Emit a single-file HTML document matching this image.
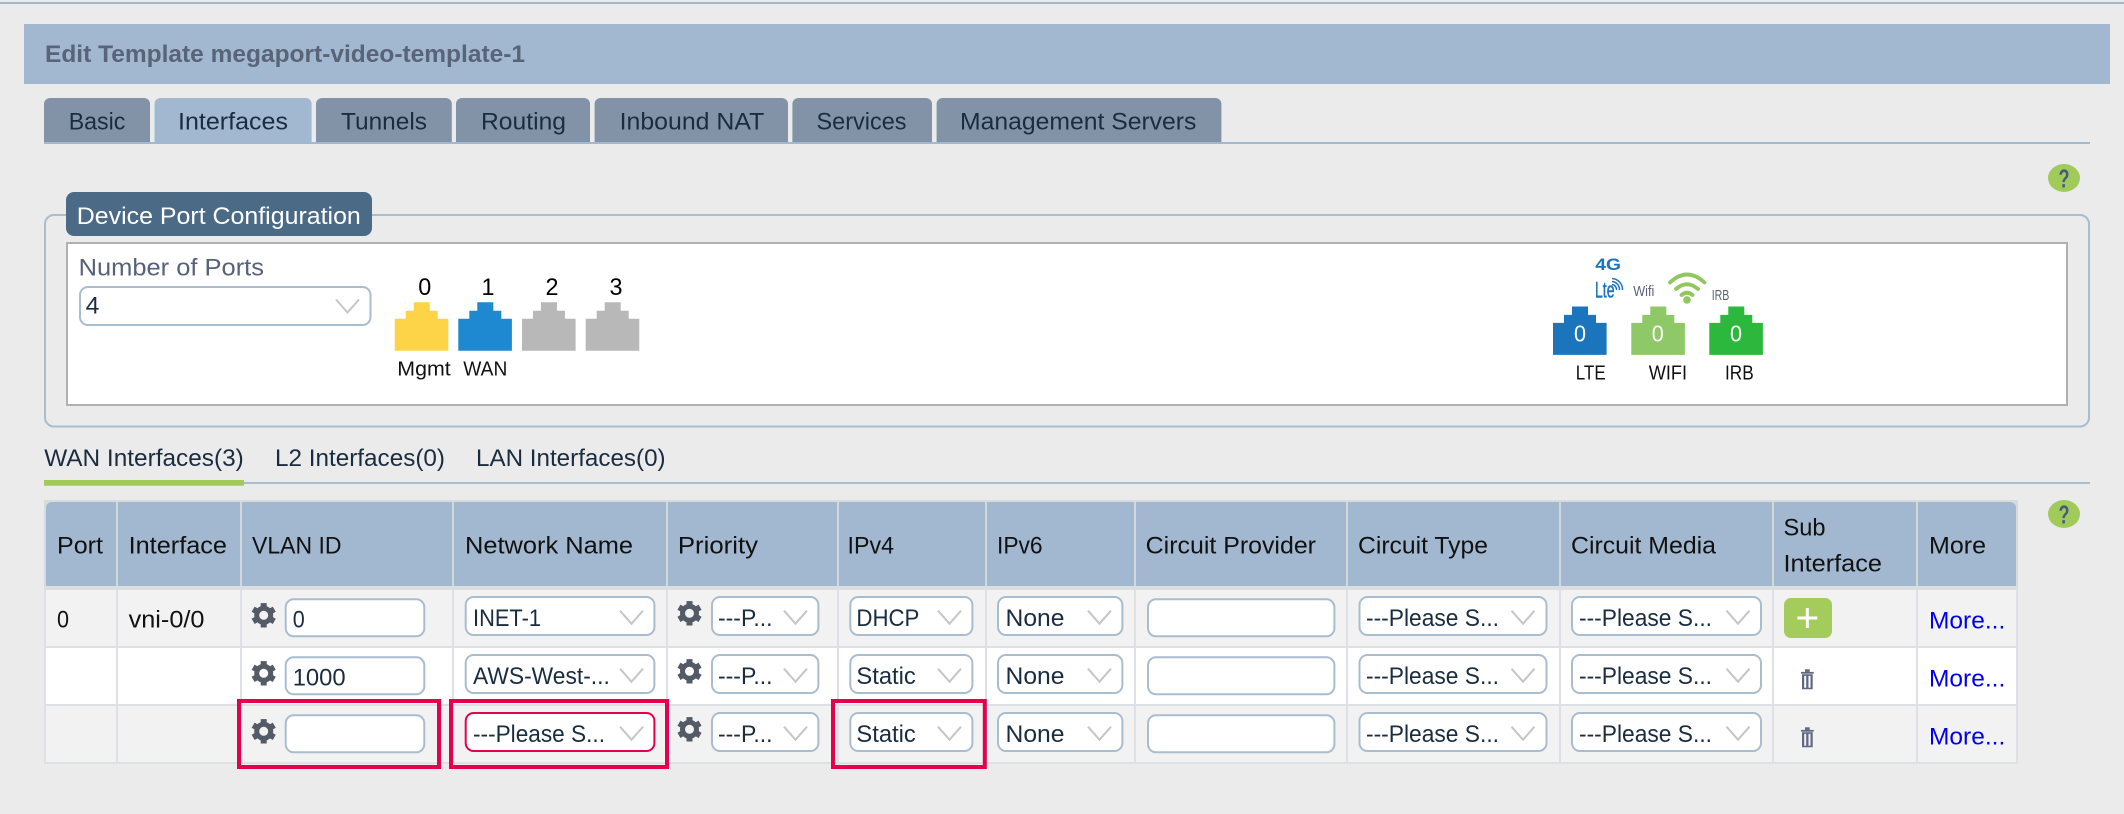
<!DOCTYPE html>
<html lang="en"><head><meta charset="utf-8"><title>Edit Template</title>
<style>
html,body{margin:0;padding:0;background:#ebebeb;width:2124px;height:814px;overflow:hidden}
svg{display:block}
text{font-family:"Liberation Sans",Arial,sans-serif;font-size:24.5px;fill:#1a2d40}
.k{fill:#111}
.b{fill:#0000ee}
.f{fill:#fff;stroke:#a9bdcf;stroke-width:2}
.t{fill:#8293a8}
.c{fill:none;stroke:#c6c6c6;stroke-width:2}
.s{fill:#dde1e6}
.h{fill:#d5d8db}
.r{fill:none;stroke:#e4004b;stroke-width:4}
.w{fill:#fff}
.sm{font-size:20.5px;fill:#111}
</style></head><body>
<svg xmlns="http://www.w3.org/2000/svg" width="2124" height="814" viewBox="0 0 2124 814">
<defs>
<g id="gear" fill="#555b66"><circle r="7" fill="none" stroke="#555b66" stroke-width="5"/><rect x="-3" y="-12.2" width="6" height="5"/><rect x="-3" y="-12.2" width="6" height="5" transform="rotate(60)"/><rect x="-3" y="-12.2" width="6" height="5" transform="rotate(120)"/><rect x="-3" y="-12.2" width="6" height="5" transform="rotate(180)"/><rect x="-3" y="-12.2" width="6" height="5" transform="rotate(240)"/><rect x="-3" y="-12.2" width="6" height="5" transform="rotate(300)"/></g>
<polygon id="port" points="19,0 35,0 35,8.4 43,8.4 43,16.4 53.6,16.4 53.6,48.4 0,48.4 0,16.4 11,16.4 11,8.4 19,8.4"/>
<polyline id="chev" class="c" points="0,0 11.5,13 23,0"/>
<g id="trash" fill="#5f6880"><rect x="0" y="2.6" width="12.7" height="1.8"/><rect x="4" y="0" width="4.7" height="2.6"/><path fill-rule="evenodd" d="M1,5H11.7V20H1ZM3.2,6.6V18.4H5.2V6.6ZM7.5,6.6V18.4H9.5V6.6Z"/></g>
</defs>

<rect x="0" y="2" width="2124" height="2" fill="#a2b8d0"/>

<!-- title -->
<rect x="24" y="24" width="2086" height="60" fill="#a2b8d0"/>
<text x="45" y="62" font-weight="bold" style="fill:#5a6478;font-size:24px" textLength="480" lengthAdjust="spacingAndGlyphs">Edit Template megaport-video-template-1</text>

<!-- tabs -->
<path class="t" d="M44,142V104a6,6 0 0 1 6-6H144a6,6 0 0 1 6,6V142Z"/>
<path fill="#a2b8d0" d="M154.500,142V104a6,6 0 0 1 6-6H305.600a6,6 0 0 1 6,6V142Z"/>
<path class="t" d="M316,142V104a6,6 0 0 1 6-6H445.800a6,6 0 0 1 6,6V142Z"/>
<path class="t" d="M456,142V104a6,6 0 0 1 6-6H584a6,6 0 0 1 6,6V142Z"/>
<path class="t" d="M594.600,142V104a6,6 0 0 1 6-6H782a6,6 0 0 1 6,6V142Z"/>
<path class="t" d="M792.400,142V104a6,6 0 0 1 6-6H926a6,6 0 0 1 6,6V142Z"/>
<path class="t" d="M936.600,142V104a6,6 0 0 1 6-6H1215.400a6,6 0 0 1 6,6V142Z"/>
<rect x="44" y="142" width="2046" height="2" fill="#a2b8d0"/>
<text x="68.700" y="129.300" textLength="56.700" lengthAdjust="spacingAndGlyphs">Basic</text>
<text x="178" y="129.300" textLength="110" lengthAdjust="spacingAndGlyphs">Interfaces</text>
<text x="341" y="129.300" textLength="86" lengthAdjust="spacingAndGlyphs">Tunnels</text>
<text x="481" y="129.300" textLength="85" lengthAdjust="spacingAndGlyphs">Routing</text>
<text x="619.600" y="129.300" textLength="144.700" lengthAdjust="spacingAndGlyphs">Inbound NAT</text>
<text x="816.500" y="129.300" textLength="90" lengthAdjust="spacingAndGlyphs">Services</text>
<text x="960" y="129.300" textLength="236.400" lengthAdjust="spacingAndGlyphs">Management Servers</text>

<!-- help 1 -->
<ellipse cx="2064" cy="178" rx="16" ry="14" fill="#a0cb5a"/>
<text x="2058.500" y="187.500" font-weight="bold" style="font-size:26px;fill:#4a5a7c" textLength="11" lengthAdjust="spacingAndGlyphs">?</text>

<!-- fieldset -->
<rect x="45" y="215" width="2044" height="211.500" rx="9" fill="none" stroke="#a9bdcf" stroke-width="2"/>
<rect x="67" y="243" width="2000" height="162" fill="#fff" stroke="#b0b0b0" stroke-width="2"/>
<rect x="66" y="192" width="306" height="44" rx="8" fill="#4a6a86"/>
<text x="76.800" y="224" style="fill:#fff" textLength="284" lengthAdjust="spacingAndGlyphs">Device Port Configuration</text>

<text x="78.600" y="275.300" style="fill:#57627a" textLength="185.400" lengthAdjust="spacingAndGlyphs">Number of Ports</text>
<rect class="f" x="80" y="287" width="290.500" height="38" rx="8"/>
<text x="85.700" y="313.300" textLength="13.800" lengthAdjust="spacingAndGlyphs">4</text>
<use href="#chev" x="336" y="299.500"/>

<!-- ports left -->
<text class="k" x="418.200" y="295" textLength="13" lengthAdjust="spacingAndGlyphs" style="fill:#000">0</text>
<text class="k" x="481.500" y="295" textLength="13" lengthAdjust="spacingAndGlyphs" style="fill:#000">1</text>
<text class="k" x="545.500" y="295" textLength="13" lengthAdjust="spacingAndGlyphs" style="fill:#000">2</text>
<text class="k" x="609.500" y="295" textLength="13" lengthAdjust="spacingAndGlyphs" style="fill:#000">3</text>
<use href="#port" x="394.700" y="302.300" fill="#fdd348"/>
<use href="#port" x="458.300" y="302.300" fill="#1e88d0"/>
<use href="#port" x="522" y="302.300" fill="#b8b8b8"/>
<use href="#port" x="585.700" y="302.300" fill="#b8b8b8"/>
<text class="sm" x="397.300" y="375.300" textLength="53.400" lengthAdjust="spacingAndGlyphs">Mgmt</text>
<text class="sm" x="463.300" y="375.300" textLength="44" lengthAdjust="spacingAndGlyphs">WAN</text>

<!-- ports right -->
<text x="1595.300" y="270" font-weight="bold" style="font-size:17px;fill:#1b75bc" textLength="25.700" lengthAdjust="spacingAndGlyphs">4G</text>
<text x="1595" y="297.300" style="font-size:22px;fill:#1b75bc;stroke:#1b75bc;stroke-width:.5" textLength="19.500" lengthAdjust="spacingAndGlyphs">Lte</text>
<g fill="none" stroke="#1b75bc" stroke-width="1.500"><path d="M1612,278.500A11,11 0 0 1 1622.500,290"/><path d="M1612,281.500A8,8 0 0 1 1619.500,290"/><path d="M1612,284.500A5,5 0 0 1 1616.500,290"/></g>
<text x="1633.300" y="296" style="font-size:14.500px;fill:#5a6478" textLength="21" lengthAdjust="spacingAndGlyphs">Wifi</text>
<g fill="none" stroke="#90c85e" stroke-width="3.800" stroke-linecap="round"><path d="M1670,282.500Q1687,266.500 1704.500,282.500"/><path d="M1676,289Q1687,279.500 1698,289"/><path d="M1681.500,295Q1687,290.500 1692.500,295"/></g>
<circle cx="1687" cy="300" r="3.800" fill="#90c85e"/>
<text x="1711.700" y="300" style="font-size:14.500px;fill:#5a6478" textLength="17.600" lengthAdjust="spacingAndGlyphs">IRB</text>
<use href="#port" x="1553" y="306.500" fill="#1b75bc"/>
<use href="#port" x="1631.300" y="306.500" fill="#8fc866"/>
<use href="#port" x="1709.300" y="306.500" fill="#2cb83c"/>
<text x="1574" y="341.300" style="font-size:23px;fill:#fff" textLength="12" lengthAdjust="spacingAndGlyphs">0</text>
<text x="1651.700" y="341.300" style="font-size:23px;fill:#fff" textLength="12" lengthAdjust="spacingAndGlyphs">0</text>
<text x="1730" y="341.300" style="font-size:23px;fill:#fff" textLength="12" lengthAdjust="spacingAndGlyphs">0</text>
<text class="sm" x="1575.700" y="379.300" textLength="30" lengthAdjust="spacingAndGlyphs">LTE</text>
<text class="sm" x="1648.700" y="379.300" textLength="38.300" lengthAdjust="spacingAndGlyphs">WIFI</text>
<text class="sm" x="1725" y="379.300" textLength="28.700" lengthAdjust="spacingAndGlyphs">IRB</text>

<!-- sub tabs -->
<text x="44.200" y="466" textLength="199.600" lengthAdjust="spacingAndGlyphs">WAN Interfaces(3)</text>
<text x="275" y="466" textLength="170" lengthAdjust="spacingAndGlyphs">L2 Interfaces(0)</text>
<text x="476" y="466" textLength="189.600" lengthAdjust="spacingAndGlyphs">LAN Interfaces(0)</text>
<rect x="244" y="482" width="1846" height="2" fill="#a9bdcf"/>
<rect x="44" y="480" width="200" height="5.700" fill="#a0cb5a"/>

<!-- help 2 -->
<ellipse cx="2064" cy="514" rx="16" ry="14" fill="#a0cb5a"/>
<text x="2058.500" y="523.500" font-weight="bold" style="font-size:26px;fill:#4a5a7c" textLength="11" lengthAdjust="spacingAndGlyphs">?</text>

<!-- table -->
<rect x="44" y="500" width="1974" height="264" fill="#d8dbde"/>
<path fill="#a2b8d0" d="M46,586V508a6,6 0 0 1 6-6H2010a6,6 0 0 1 6,6V586Z"/>
<rect x="46" y="590" width="1970" height="56" fill="#f2f2f2"/>
<rect x="46" y="648" width="1970" height="56" fill="#fff"/>
<rect x="46" y="706" width="1970" height="56" fill="#f2f2f2"/>
<rect class="s" x="44" y="646" width="1974" height="2"/>
<rect class="s" x="44" y="704" width="1974" height="2"/>
<rect class="s" x="44" y="762" width="1974" height="2"/>
<rect x="44" y="586" width="1974" height="4" fill="#dcdee0"/>
<!-- separators -->
<g class="h"><rect x="116" y="502" width="2" height="84"/><rect x="240" y="502" width="2" height="84"/><rect x="452" y="502" width="2" height="84"/><rect x="666" y="502" width="2" height="84"/><rect x="837" y="502" width="2" height="84"/><rect x="985" y="502" width="2" height="84"/><rect x="1134" y="502" width="2" height="84"/><rect x="1346" y="502" width="2" height="84"/><rect x="1559" y="502" width="2" height="84"/><rect x="1772" y="502" width="2" height="84"/><rect x="1916" y="502" width="2" height="84"/></g>
<g class="s"><rect x="44" y="590" width="2" height="174"/><rect x="116" y="590" width="2" height="174"/><rect x="240" y="590" width="2" height="174"/><rect x="452" y="590" width="2" height="174"/><rect x="666" y="590" width="2" height="174"/><rect x="837" y="590" width="2" height="174"/><rect x="985" y="590" width="2" height="174"/><rect x="1134" y="590" width="2" height="174"/><rect x="1346" y="590" width="2" height="174"/><rect x="1559" y="590" width="2" height="174"/><rect x="1772" y="590" width="2" height="174"/><rect x="1916" y="590" width="2" height="174"/><rect x="2016" y="590" width="2" height="174"/></g>

<!-- header text -->
<text class="k" x="57" y="553.300" textLength="46" lengthAdjust="spacingAndGlyphs">Port</text>
<text class="k" x="128.600" y="553.300" textLength="98.400" lengthAdjust="spacingAndGlyphs">Interface</text>
<text class="k" x="252" y="553.300" textLength="89.500" lengthAdjust="spacingAndGlyphs">VLAN ID</text>
<text class="k" x="465" y="553.300" textLength="168" lengthAdjust="spacingAndGlyphs">Network Name</text>
<text class="k" x="677.900" y="553.300" textLength="80.100" lengthAdjust="spacingAndGlyphs">Priority</text>
<text class="k" x="847.500" y="553.300" textLength="46.500" lengthAdjust="spacingAndGlyphs">IPv4</text>
<text class="k" x="997" y="553.300" textLength="45.600" lengthAdjust="spacingAndGlyphs">IPv6</text>
<text class="k" x="1145.700" y="553.300" textLength="170.300" lengthAdjust="spacingAndGlyphs">Circuit Provider</text>
<text class="k" x="1358" y="553.300" textLength="130" lengthAdjust="spacingAndGlyphs">Circuit Type</text>
<text class="k" x="1571" y="553.300" textLength="145" lengthAdjust="spacingAndGlyphs">Circuit Media</text>
<text class="k" x="1783.500" y="535.300" textLength="42" lengthAdjust="spacingAndGlyphs">Sub</text>
<text class="k" x="1783.500" y="571.300" textLength="98.500" lengthAdjust="spacingAndGlyphs">Interface</text>
<text class="k" x="1929" y="553.300" textLength="57" lengthAdjust="spacingAndGlyphs">More</text>

<!-- row 0 fixed cells -->
<text class="k" x="57" y="627.300" textLength="12" lengthAdjust="spacingAndGlyphs">0</text>
<text class="k" x="128.600" y="627.300" textLength="75.900" lengthAdjust="spacingAndGlyphs">vni-0/0</text>

<!-- VLAN -->
<use href="#gear" x="263.700" y="615.300"/><use href="#gear" x="263.700" y="673.300"/><use href="#gear" x="263.700" y="731.300"/>
<rect class="f" x="285.700" y="599.300" width="138.600" height="37" rx="8"/>
<rect class="f" x="285.700" y="657.300" width="138.600" height="37" rx="8"/>
<rect class="f" x="285.700" y="715.300" width="138.600" height="37" rx="8"/>
<text x="292.700" y="627.700" textLength="12" lengthAdjust="spacingAndGlyphs">0</text>
<text x="292.700" y="685.300" textLength="53" lengthAdjust="spacingAndGlyphs">1000</text>

<!-- Network -->
<rect class="f" x="465.700" y="597" width="188.700" height="38" rx="8"/>
<rect class="f" x="465.700" y="655" width="188.700" height="38" rx="8"/>
<rect class="f" x="465.700" y="713" width="188.700" height="38" rx="8" style="stroke:#e4004b"/>
<text x="473" y="626" textLength="68" lengthAdjust="spacingAndGlyphs">INET-1</text>
<text x="473" y="684" textLength="136.800" lengthAdjust="spacingAndGlyphs">AWS-West-...</text>
<text x="473" y="742" textLength="132" lengthAdjust="spacingAndGlyphs">---Please S...</text>
<use href="#chev" x="620" y="610.700"/><use href="#chev" x="620" y="668.700"/><use href="#chev" x="620" y="726.700"/>

<!-- Priority -->
<use href="#gear" x="689.500" y="613.300"/><use href="#gear" x="689.500" y="671.300"/><use href="#gear" x="689.500" y="729.300"/>
<rect class="f" x="712" y="597" width="106.400" height="38" rx="8"/>
<rect class="f" x="712" y="655" width="106.400" height="38" rx="8"/>
<rect class="f" x="712" y="713" width="106.400" height="38" rx="8"/>
<text x="718" y="626" textLength="54.500" lengthAdjust="spacingAndGlyphs">---P...</text>
<text x="718" y="684" textLength="54.500" lengthAdjust="spacingAndGlyphs">---P...</text>
<text x="718" y="742" textLength="54.500" lengthAdjust="spacingAndGlyphs">---P...</text>
<use href="#chev" x="784" y="610.700"/><use href="#chev" x="784" y="668.700"/><use href="#chev" x="784" y="726.700"/>

<!-- IPv4 -->
<rect class="f" x="850.300" y="597" width="122.100" height="38" rx="8"/>
<rect class="f" x="850.300" y="655" width="122.100" height="38" rx="8"/>
<rect class="f" x="850.300" y="713" width="122.100" height="38" rx="8"/>
<text x="856.400" y="626" textLength="63" lengthAdjust="spacingAndGlyphs">DHCP</text>
<text x="856.400" y="684" textLength="59.400" lengthAdjust="spacingAndGlyphs">Static</text>
<text x="856.400" y="742" textLength="59.400" lengthAdjust="spacingAndGlyphs">Static</text>
<use href="#chev" x="938" y="610.700"/><use href="#chev" x="938" y="668.700"/><use href="#chev" x="938" y="726.700"/>

<!-- IPv6 -->
<rect class="f" x="998" y="597" width="124.400" height="38" rx="8"/>
<rect class="f" x="998" y="655" width="124.400" height="38" rx="8"/>
<rect class="f" x="998" y="713" width="124.400" height="38" rx="8"/>
<text x="1005.500" y="626" textLength="59" lengthAdjust="spacingAndGlyphs">None</text>
<text x="1005.500" y="684" textLength="59" lengthAdjust="spacingAndGlyphs">None</text>
<text x="1005.500" y="742" textLength="59" lengthAdjust="spacingAndGlyphs">None</text>
<use href="#chev" x="1088" y="610.700"/><use href="#chev" x="1088" y="668.700"/><use href="#chev" x="1088" y="726.700"/>

<!-- Provider -->
<rect class="f" x="1148" y="599.300" width="186.400" height="37" rx="8"/>
<rect class="f" x="1148" y="657.300" width="186.400" height="37" rx="8"/>
<rect class="f" x="1148" y="715.300" width="186.400" height="37" rx="8"/>

<!-- Circuit type -->
<rect class="f" x="1359.500" y="597" width="187" height="38" rx="8"/>
<rect class="f" x="1359.500" y="655" width="187" height="38" rx="8"/>
<rect class="f" x="1359.500" y="713" width="187" height="38" rx="8"/>
<text x="1366" y="626" textLength="133" lengthAdjust="spacingAndGlyphs">---Please S...</text>
<text x="1366" y="684" textLength="133" lengthAdjust="spacingAndGlyphs">---Please S...</text>
<text x="1366" y="742" textLength="133" lengthAdjust="spacingAndGlyphs">---Please S...</text>
<use href="#chev" x="1511.500" y="610.700"/><use href="#chev" x="1511.500" y="668.700"/><use href="#chev" x="1511.500" y="726.700"/>

<!-- Circuit media -->
<rect class="f" x="1572" y="597" width="189" height="38" rx="8"/>
<rect class="f" x="1572" y="655" width="189" height="38" rx="8"/>
<rect class="f" x="1572" y="713" width="189" height="38" rx="8"/>
<text x="1579" y="626" textLength="133" lengthAdjust="spacingAndGlyphs">---Please S...</text>
<text x="1579" y="684" textLength="133" lengthAdjust="spacingAndGlyphs">---Please S...</text>
<text x="1579" y="742" textLength="133" lengthAdjust="spacingAndGlyphs">---Please S...</text>
<use href="#chev" x="1726.500" y="610.700"/><use href="#chev" x="1726.500" y="668.700"/><use href="#chev" x="1726.500" y="726.700"/>

<!-- sub interface -->
<rect x="1784" y="598" width="48" height="40" rx="7" fill="#a3cc5a"/>
<path d="M1807.300,608V628M1797.300,618H1817.300" stroke="#fff" stroke-width="3" fill="none"/>
<use href="#trash" x="1801" y="669.300"/>
<use href="#trash" x="1801" y="727.300"/>

<!-- more -->
<text class="b" x="1929" y="628.300" textLength="76.300" lengthAdjust="spacingAndGlyphs">More...</text>
<text class="b" x="1929" y="686.300" textLength="76.300" lengthAdjust="spacingAndGlyphs">More...</text>
<text class="b" x="1929" y="744.300" textLength="76.300" lengthAdjust="spacingAndGlyphs">More...</text>

<!-- highlight boxes -->
<rect class="r" x="239" y="701" width="200" height="66"/>
<rect class="r" x="451" y="701" width="216" height="66"/>
<rect class="r" x="833" y="701" width="151.800" height="66"/>
</svg>
</body></html>
